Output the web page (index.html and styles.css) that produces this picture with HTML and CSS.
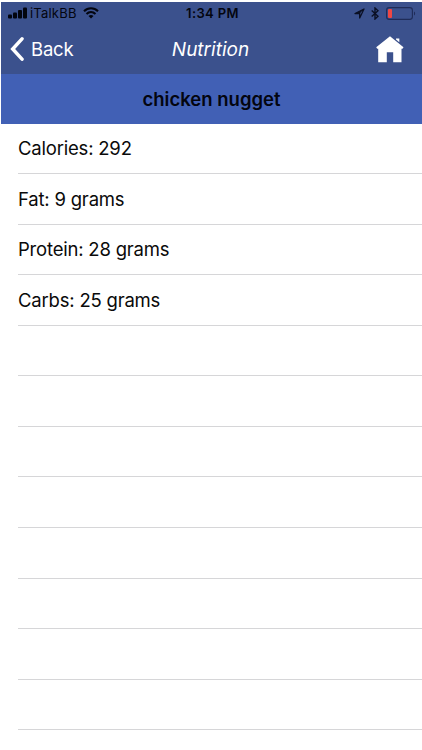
FILE: index.html
```html
<!DOCTYPE html>
<html lang="en">
<head>
  <meta charset="UTF-8">
  <meta name="viewport" content="width=device-width, initial-scale=1.0">
  <title>Nutrition</title>
  <link rel="stylesheet" href="styles.css">
</head>
<body>
  <div class="screen">

    <header class="header">
      <div class="statusBar">
        <div class="carrier">
          <svg class="signal" width="19" height="12" viewBox="0 0 19 12">
            <rect x="0" y="7.5" width="4" height="4" rx="1"/>
            <rect x="5" y="5.5" width="4" height="6" rx="1"/>
            <rect x="10" y="3" width="4" height="8.5" rx="1"/>
            <rect x="15" y="0.5" width="4" height="11" rx="1"/>
          </svg>
          <span class="carrierName">iTalkBB</span>
          <svg class="wifi" width="16" height="12" viewBox="0 0 16 12">
            <path d="M1 4.2C5 0.3 11 0.3 15 4.2M3.5 6.9C6.1 4.5 9.9 4.5 12.5 6.9" fill="none" stroke="#03050f" stroke-width="2.1"/>
            <path d="M8 11.5L5.5 9C7 7.8 9 7.8 10.5 9Z"/>
          </svg>
        </div>
        <span class="time">1:34 PM</span>
        <div class="indicators">
          <svg class="location" width="11" height="11" viewBox="0 0 11 11">
            <path d="M10 1L5.7 10V5.5H1Z" fill="none" stroke="#0b1025" stroke-width="1.3" stroke-linejoin="round"/>
            <path d="M10 1L5.7 5.5H1Z" fill="#0b1025"/>
          </svg>
          <svg class="bluetooth" width="8" height="13" viewBox="0 0 8 13">
            <path d="M0.7 3.5L7 9.2L4 12V1L7 3.8L0.7 9.5" fill="none" stroke="#0b1025" stroke-width="1.4"/>
          </svg>
          <svg class="battery" width="30" height="13" viewBox="0 0 30 13">
            <rect x="0.6" y="0.6" width="25.8" height="11.8" rx="2.6" fill="none" stroke="#1f2c58" stroke-width="1.1"/>
            <rect x="2" y="2" width="4" height="9" rx="1" fill="#ef4744"/>
            <path d="M28 4.5C29.5 5 29.5 8 28 8.5Z" fill="#1f2c58"/>
          </svg>
        </div>
      </div>

      <nav class="navBar">
        <a class="back">
          <svg width="14" height="24" viewBox="0 0 14 24">
            <path d="M12 1.9L2.7 12L12 22.1" fill="none" stroke="#fff" stroke-width="3.5" stroke-linecap="round"/>
          </svg>
          <span class="backText">Back</span>
        </a>
        <h1 class="navTitle">Nutrition</h1>
        <a class="home">
          <svg width="28" height="27" viewBox="0 0 28 27" fill="#fff">
            <path d="M14 0.2L27.5 11.2L26.5 12.8H25.5V26.3H17.2V16.2H10.8V26.3H2.2V12.8H1.2L0.2 11.2Z"/>
            <path d="M20 2.5H23.3V6.3L20 3.4Z"/>
          </svg>
        </a>
      </nav>
    </header>

    <h2 class="foodName">chicken nugget</h2>

    <ul class="list">
      <li>Calories: 292</li>
      <li>Fat: 9 grams</li>
      <li>Protein: 28 grams</li>
      <li>Carbs: 25 grams</li>
      <li></li>
      <li></li>
      <li></li>
      <li></li>
      <li></li>
      <li></li>
      <li></li>
      <li></li>
    </ul>

  </div>
</body>
</html>
```
FILE: styles.css
```css
body, html {
  margin: 0;
  padding: 0;
}
body {
  font-family: Inter, "Liberation Sans", sans-serif;
  background-color: #fff;
  color: #0a0a0a;
}
.screen {
  height: 750px;
  box-sizing: border-box;
  padding: 2px 0 0 1px;
  overflow: hidden;
}
.header {
  height: 72px;
  background-color: #3b518d;
}
.statusBar {
  display: grid;
  grid-template-columns: 1fr auto 1fr;
  align-items: center;
  height: 22px;
  padding: 0 6px 0 7px;
  color: #03050f;
  fill: #03050f;
  font-size: 13px;
}
.carrier, .indicators {
  display: flex;
  align-items: center;
}
.carrierName {
  margin-left: 3px;
  letter-spacing: 0.2px;
}
.wifi {
  margin-left: 6px;
}
.time {
  margin-left: 1px;
  font-weight: 600;
  letter-spacing: 0.4px;
}
.indicators {
  justify-content: flex-end;
}
.bluetooth {
  margin-left: 6px;
}
.battery {
  margin-left: 7px;
}
.navBar {
  display: grid;
  grid-template-columns: 1fr auto 1fr;
  align-items: center;
  height: 50px;
  padding: 0 18px 0 9px;
  color: #fff;
}
.back {
  display: flex;
  align-items: center;
}
.backText {
  margin-left: 7px;
  font-size: 18.5px;
  letter-spacing: -0.2px;
}
.navTitle {
  margin: 0 0 0 7px;
  font-size: 19px;
  font-weight: 400;
  font-style: italic;
}
.home {
  display: flex;
  justify-content: flex-end;
}
.foodName {
  display: flex;
  align-items: center;
  justify-content: center;
  height: 49.5px;
  margin: 0;
  background-color: #4160b5;
  color: #03050f;
  font-size: 18.5px;
  font-weight: 600;
}
.list {
  margin: 0;
  padding: 0 0 0 17px;
  list-style: none;
}
.list li {
  display: flex;
  align-items: center;
  box-sizing: border-box;
  height: 50.57px;
  border-bottom: 1px solid #d6d6d8;
  font-size: 18.5px;
  letter-spacing: -0.2px;
}
```
